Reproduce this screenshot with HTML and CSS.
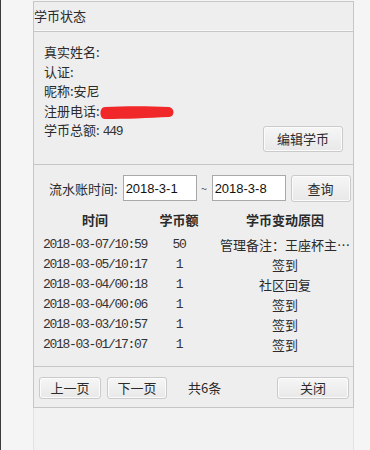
FILE: index.html
```html
<!DOCTYPE html>
<html lang="zh-CN">
<head>
    <meta charset="UTF-8">
    <title>学币状态</title>
    <link rel="stylesheet" href="styles.css">
</head>
<body>

    <div class="wrap">
        <div class="panel">
            <div class="panel-title">学币状态</div>

            <!-- 用户信息 -->
            <div class="info">
                <div class="info-lines">
                    <div>真实姓名:</div>
                    <div>认证:</div>
                    <div>昵称:安尼</div>
                    <div>注册电话:<svg class="scribble" width="76" height="16" viewBox="0 0 76 16"><path d="M6 3 C 25 2, 50 2, 70 3 C 76 4, 76 13, 70 13 C 50 14, 25 15, 6 15 C 0 15, 0 3, 6 3 Z" fill="#f0282a"/></svg></div>
                    <div>学币总额:<span class="num total">449</span></div>
                </div>
                <button class="btn btn-edit">编辑学币</button>
            </div>

            <!-- 流水账 -->
            <div class="records">
                <div class="filter">
                    <label class="filter-label" for="date-from">流水账时间:</label>
                    <input class="date-input" id="date-from" type="text" value="2018-3-1">
                    <span class="tilde">~</span>
                    <input class="date-input" id="date-to" type="text" value="2018-3-8">
                    <button class="btn btn-query">查询</button>
                </div>

                <div class="table">
                    <div class="row head">
                        <div>时间</div>
                        <div>学币额</div>
                        <div class="reason">学币变动原因</div>
                    </div>
                    <div class="row first">
                        <div class="num">2018-03-07/10:59</div>
                        <div class="num">50</div>
                        <div class="reason">管理备注：王座杯主…</div>
                    </div>
                    <div class="row">
                        <div class="num">2018-03-05/10:17</div>
                        <div class="num">1</div>
                        <div class="reason">签到</div>
                    </div>
                    <div class="row">
                        <div class="num">2018-03-04/00:18</div>
                        <div class="num">1</div>
                        <div class="reason">社区回复</div>
                    </div>
                    <div class="row">
                        <div class="num">2018-03-04/00:06</div>
                        <div class="num">1</div>
                        <div class="reason">签到</div>
                    </div>
                    <div class="row">
                        <div class="num">2018-03-03/10:57</div>
                        <div class="num">1</div>
                        <div class="reason">签到</div>
                    </div>
                    <div class="row">
                        <div class="num">2018-03-01/17:07</div>
                        <div class="num">1</div>
                        <div class="reason">签到</div>
                    </div>
                </div>
            </div>

            <!-- 分页 -->
            <div class="pager">
                <button class="btn btn-prev">上一页</button>
                <button class="btn btn-next">下一页</button>
                <span class="count">共6条</span>
                <button class="btn btn-close">关闭</button>
            </div>
        </div>
        <div class="below"></div>
    </div>

</body>
</html>
```

FILE: styles.css
```css
/* Page */
body {
    margin: 0;
    height: 450px;
    overflow: hidden;
    box-sizing: border-box;
    border-left: 1px solid #3c3c3c;
    background-color: #f5f5f5;
    font-family: "Noto Sans CJK SC", sans-serif;
    font-size: 13px;
    color: #2b2b2b;
}

.wrap {
    margin-left: 32px;
    width: 321px;
}

.panel {
    margin-top: 1px;
    border: 1px solid #c6c6c6;
    background-color: #eeeeee;
}

.panel-title {
    height: 29px;
    line-height: 27px;
    border-bottom: 1px solid #c6c6c6;
    box-shadow: inset 0 -3px 0 -2px #f8f8f8;
}

/* Buttons */
.btn {
    box-sizing: border-box;
    padding: 0;
    border: 1px solid #cacaca;
    border-radius: 3px;
    background: linear-gradient(#f6f6f6, #e8e8e8);
    box-shadow: inset 0 0 0 1px #fbfbfb;
    font-family: "Noto Sans CJK SC", sans-serif;
    font-size: 13px;
    color: #2b2b2b;
    cursor: pointer;
}

/* Info */
.info {
    display: flex;
    justify-content: space-between;
    align-items: flex-end;
    padding: 10px 10px 12px 10px;
    border-bottom: 1px solid #c6c6c6;
}

.info-lines {
    line-height: 19.5px;
    padding-bottom: 10px;
}

.scribble {
    vertical-align: middle;
    margin-left: -1px;
}

.num {
    font-family: "Liberation Mono", monospace;
    font-size: 13px;
    letter-spacing: -1.3px;
    color: #333;
}

.total {
    margin-left: 3px;
}

.btn-edit {
    width: 80px;
    height: 26px;
}

/* Filter */
.records {
    padding: 10px 0 11px 0;
    border-bottom: 1px solid #c6c6c6;
}

.filter {
    display: flex;
    align-items: center;
    padding-left: 15px;
}

.filter-label {
    margin-right: 5px;
}

.date-input {
    box-sizing: border-box;
    width: 74px;
    height: 26px;
    padding: 0 2px;
    border: 1px solid #a9a9a9;
    background: #fff;
    font-family: "Liberation Sans", sans-serif;
    font-size: 13px;
    color: #111;
    outline: none;
}

.tilde {
    width: 15px;
    text-align: center;
    font-size: 11px;
    color: #555;
}

.btn-query {
    width: 60px;
    height: 27px;
    margin-left: 5px;
}

/* Table */
.table {
    margin-top: 8px;
    padding-left: 8px;
}

.row {
    display: grid;
    grid-template-columns: 106px 62px 1fr;
    height: 20px;
    line-height: 20px;
    text-align: center;
}

.row.head {
    font-weight: bold;
}

.row.first {
    margin-top: 5px;
}

.reason {
    padding-left: 7px;
    white-space: nowrap;
}

/* Pager */
.pager {
    display: flex;
    align-items: center;
    padding: 10px 4px 8px 5px;
}

.btn-prev {
    width: 62px;
    height: 22px;
}

.btn-next {
    width: 60px;
    height: 22px;
    margin-left: 6px;
}

.count {
    margin-left: 21px;
}

.btn-close {
    width: 72px;
    height: 22px;
    margin-left: auto;
}

.below {
    height: 60px;
    border-left: 1px solid #e3e3e3;
    border-right: 1px solid #e3e3e3;
    background-color: #f2f2f2;
}
```
